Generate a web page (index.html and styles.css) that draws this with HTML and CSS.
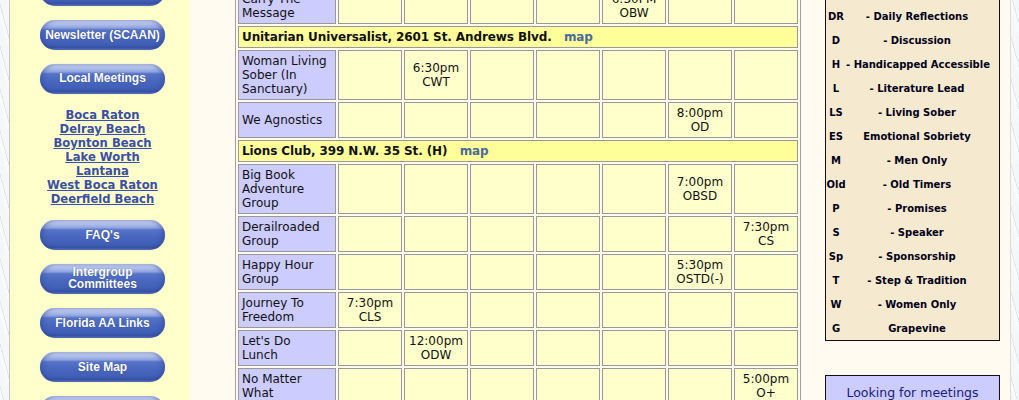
FILE: index.html
```html
<!DOCTYPE html>
<html>
<head>
<meta charset="utf-8">
<title>Meetings</title>
<link rel="stylesheet" href="styles.css">
</head>
<body>
<div class="page">
  <aside class="side">
    <nav class="side-inner">
      <a class="btn" href="#">Home</a>
      <a class="btn" href="#">Newsletter (SCAAN)</a>
      <a class="btn btn-high" href="#">Local Meetings</a>
      <div class="towns">
        <a href="#">Boca Raton</a>
        <a href="#">Delray Beach</a>
        <a href="#">Boynton Beach</a>
        <a href="#">Lake Worth</a>
        <a href="#">Lantana</a>
        <a href="#">West Boca Raton</a>
        <a href="#">Deerfield Beach</a>
      </div>
      <a class="btn" href="#">FAQ's</a>
      <a class="btn btn-two" href="#">Intergroup<br>Committees</a>
      <a class="btn" href="#">Florida AA Links</a>
      <a class="btn" href="#">Site Map</a>
      <a class="btn" href="#">Contact Us</a>
    </nav>
  </aside>
  <main class="main">
    <table class="sched">
      <colgroup>
        <col class="c-name"><col class="c-day"><col class="c-day"><col class="c-day"><col class="c-day"><col class="c-day"><col class="c-day"><col class="c-day">
      </colgroup>
      <tr><td class="name">Carry The<br>Message</td><td></td><td></td><td></td><td></td><td>6:30PM<br>OBW</td><td></td><td></td></tr>
      <tr><td class="loc" colspan="8">Unitarian Universalist, 2601 St. Andrews Blvd. &nbsp;&nbsp;<a href="#">map</a></td></tr>
      <tr><td class="name">Woman Living<br>Sober (In<br>Sanctuary)</td><td></td><td>6:30pm<br>CWT</td><td></td><td></td><td></td><td></td><td></td></tr>
      <tr><td class="name">We Agnostics</td><td></td><td></td><td></td><td></td><td></td><td>8:00pm<br>OD</td><td></td></tr>
      <tr><td class="loc" colspan="8">Lions Club, 399 N.W. 35 St. (H) &nbsp;&nbsp;<a href="#">map</a></td></tr>
      <tr><td class="name">Big Book<br>Adventure<br>Group</td><td></td><td></td><td></td><td></td><td></td><td>7:00pm<br>OBSD</td><td></td></tr>
      <tr><td class="name">Derailroaded<br>Group</td><td></td><td></td><td></td><td></td><td></td><td></td><td>7:30pm<br>CS</td></tr>
      <tr><td class="name">Happy Hour<br>Group</td><td></td><td></td><td></td><td></td><td></td><td>5:30pm<br>OSTD(-)</td><td></td></tr>
      <tr><td class="name">Journey To<br>Freedom</td><td>7:30pm<br>CLS</td><td></td><td></td><td></td><td></td><td></td><td></td></tr>
      <tr><td class="name">Let's Do<br>Lunch</td><td></td><td>12:00pm<br>ODW</td><td></td><td></td><td></td><td></td><td></td></tr>
      <tr><td class="name">No Matter<br>What</td><td></td><td></td><td></td><td></td><td></td><td></td><td>5:00pm<br>O+</td></tr>
    </table>
    <div class="legend-col">
      <div class="legend">
        <span>O</span><span>- Open</span>
        <span>C</span><span>- Closed</span>
        <span>B</span><span>- Big Book</span>
        <span>DR</span><span>- Daily Reflections</span>
        <span>D</span><span>- Discussion</span>
        <span>H</span><span>- Handicapped Accessible</span>
        <span>L</span><span>- Literature Lead</span>
        <span>LS</span><span>- Living Sober</span>
        <span>ES</span><span>Emotional Sobriety</span>
        <span>M</span><span>- Men Only</span>
        <span>Old</span><span>- Old Timers</span>
        <span>P</span><span>- Promises</span>
        <span>S</span><span>- Speaker</span>
        <span>Sp</span><span>- Sponsorship</span>
        <span>T</span><span>- Step &amp; Tradition</span>
        <span>W</span><span>- Women Only</span>
        <span>G</span><span>Grapevine</span>
      </div>
      <div class="looking">Looking for meetings<br>in other areas?</div>
    </div>
  </main>
</div>
</body>
</html>
```

FILE: styles.css
```css
html, body {
  margin: 0;
  padding: 0;
}
body {
  background-color: #eceef2;
  background-image: repeating-linear-gradient(75deg, rgba(255,255,255,0.7) 0 3px, rgba(210,214,222,0.35) 3px 4px, rgba(255,255,255,0.5) 4px 11px);
  font-family: "DejaVu Sans", Verdana, sans-serif;
  overflow: hidden;
  height: 400px;
}
.page {
  margin-left: 9px;
  width: 1000px;
  border-left: 1px solid #c4c4c4;
  border-right: 1px solid #e0ddd4;
  display: flex;
  min-height: 400px;
}
.side {
  width: 150px;
  padding-left: 30px;
  background: #ffffcc;
}
.side-inner {
  width: 125px;
  margin-top: -24px;
  display: flex;
  flex-direction: column;
  gap: 14px;
}
.btn {
  display: flex;
  align-items: center;
  justify-content: center;
  height: 30px;
  padding-bottom: 1px;
  box-sizing: border-box;
  border-radius: 15px;
  background: linear-gradient(to bottom, #d6def4 0%, #b1c0ea 14%, #8ea2de 26%, #5574c6 33%, #4967bf 55%, #4360b8 78%, #3a56a9 92%, #6a83c6 100%);
  box-shadow: inset 3px 0 4px rgba(40,60,150,0.35), inset -3px 0 4px rgba(40,60,150,0.35), 0 0 1px rgba(120,140,210,0.6);
  color: #ffffff;
  font-family: "Liberation Sans", Arial, sans-serif;
  font-weight: bold;
  font-size: 12px;
  line-height: 12px;
  text-align: center;
  text-decoration: none;
  text-shadow: 0 0 1px rgba(20,30,90,0.6);
}
.btn-high {
  padding-bottom: 3px;
}
.btn-two {
  line-height: 12px;
  padding-bottom: 2px;
}
.towns {
  display: flex;
  flex-direction: column;
  align-items: center;
  font-weight: bold;
  font-size: 11.6px;
  line-height: 14px;
}
.towns a {
  color: #3a4fa5;
  text-decoration: underline;
}
.main {
  flex: 1;
  background: #fffbf0;
  display: flex;
  align-items: flex-start;
  padding-left: 45px;
}
.sched {
  margin-top: -15px;
  width: 566px;
  table-layout: fixed;
  border-collapse: separate;
  border-spacing: 2px;
  border: 1px solid #a0a0a0;
  font-size: 12px;
  line-height: 14px;
  color: #111111;
}
.c-name { width: 98px; }
.c-day { width: 64px; }
.sched td {
  border: 1px solid #999999;
  padding: 3px;
  background: #ffffcc;
  text-align: center;
  vertical-align: middle;
}
.sched td.name {
  background: #ccccff;
  text-align: left;
}
.sched td.loc {
  background: #ffff99;
  text-align: left;
  font-weight: bold;
  white-space: nowrap;
  letter-spacing: -0.1px;
}
.loc a {
  color: #4a6a9a;
  text-decoration: none;
}
.legend-col {
  margin-left: 24px;
  margin-top: -69px;
  width: 175px;
}
.legend {
  box-sizing: border-box;
  width: 175px;
  border: 1px solid #111111;
  background: #f5ead0;
  display: grid;
  grid-template-columns: 20px 142px;
  grid-auto-rows: 24px;
  align-items: center;
  text-align: center;
  font-size: 10px;
  font-weight: bold;
  color: #000018;
  white-space: nowrap;
}
.looking {
  margin-top: 34px;
  box-sizing: border-box;
  width: 175px;
  border: 1px solid #111111;
  background: #ccccff;
  color: #1a1a80;
  font-size: 12.5px;
  line-height: 15px;
  text-align: center;
  padding: 9px 4px;
}
```
